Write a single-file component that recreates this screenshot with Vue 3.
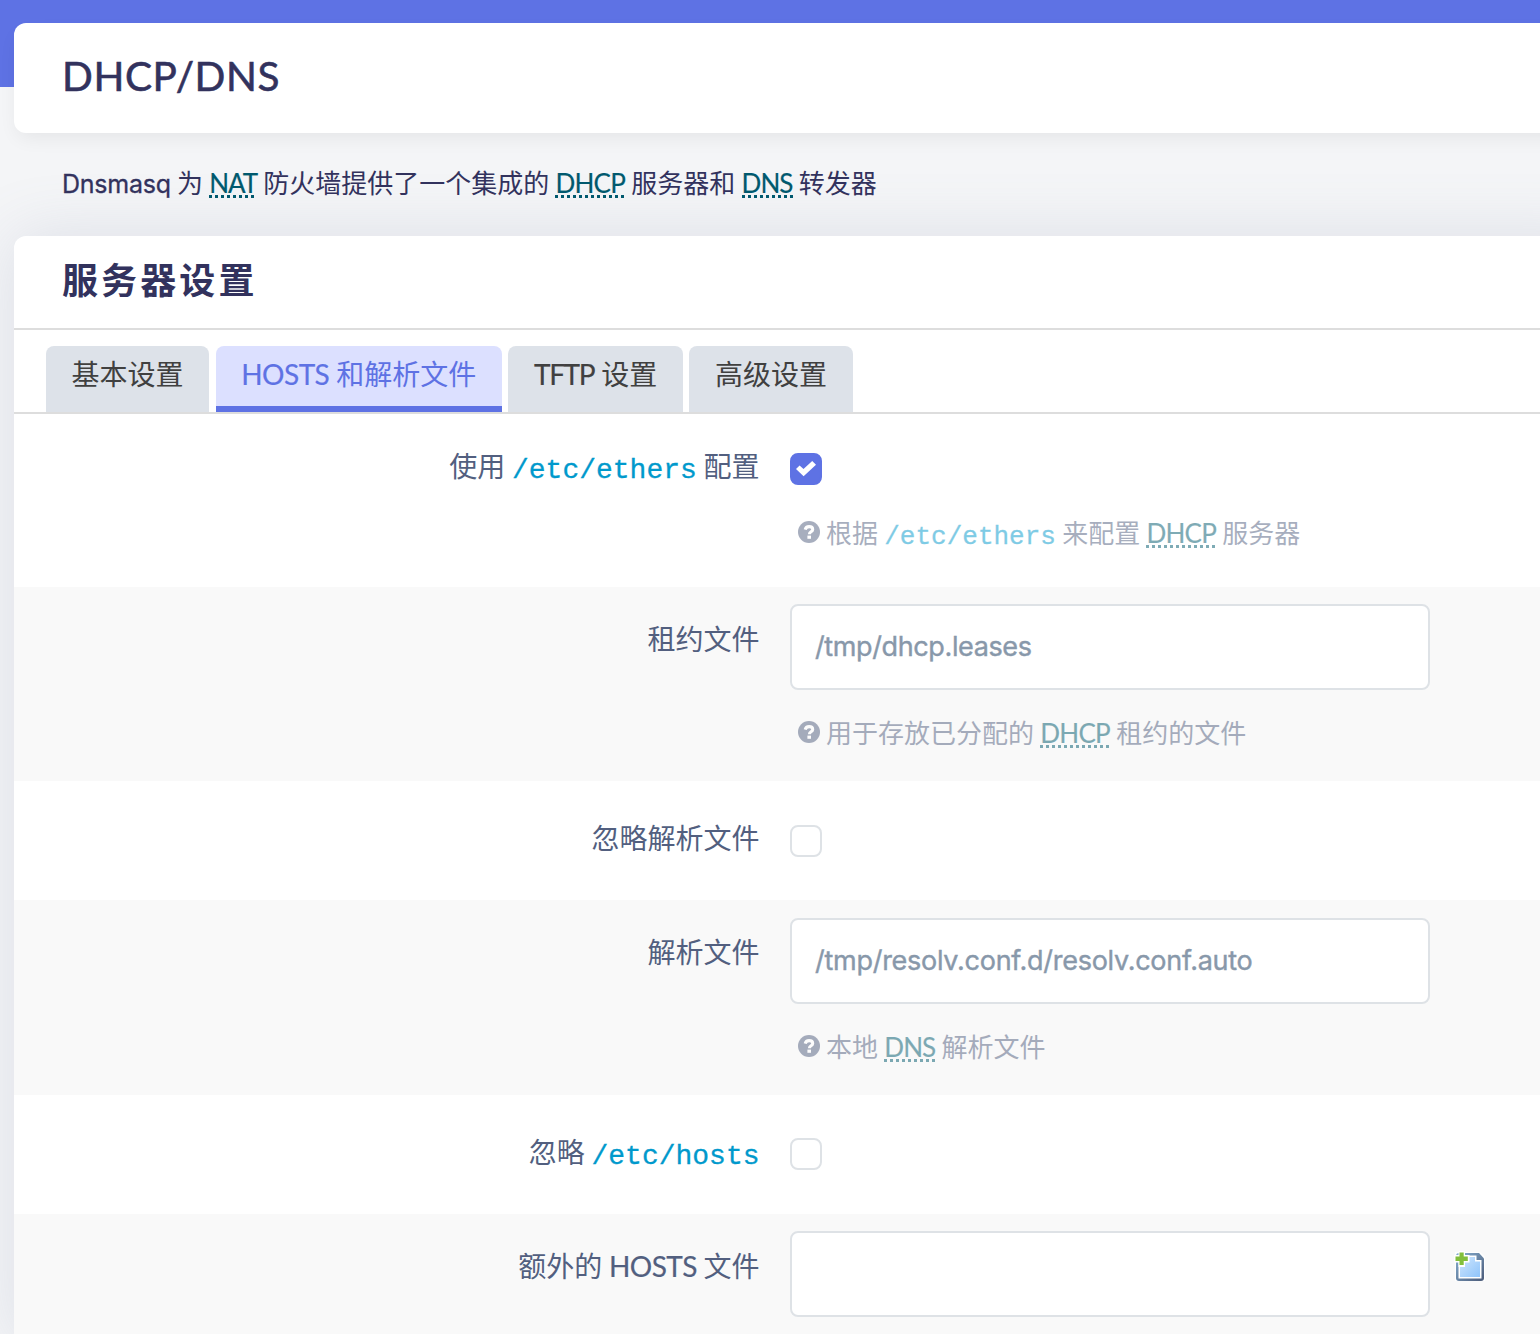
<script setup>
import { h } from 'vue'

const tabs = [
  { han: '基本设置' },
  { latin: 'HOSTS', han: '和解析文件', active: true },
  { latin: 'TFTP', han: '设置' },
  { han: '高级设置' },
]

// Filled help circle shown in front of each hint
const HelpIcon = () =>
  h('svg', { viewBox: '0 0 22 22', width: 22, height: 22 }, [
    h('circle', { cx: 11, cy: 11, r: 11, fill: '#525f7f' }),
    h('path', {
      d: 'M7.2 8.6C7.6 6.6 9 5.6 11.1 5.6c2.1 0 3.6 1.1 3.6 2.9 0 2.4-3.3 2.3-3.3 4.7',
      fill: 'none',
      stroke: '#fff',
      'stroke-width': 3.1,
    }),
    h('rect', { x: 9.4, y: 14.6, width: 3.6, height: 3.2, fill: '#fff' }),
  ])
</script>

<template>
  <div class="page">
    <header class="card title-card"><h2>DHCP/DNS</h2></header>
    <p class="intro"><span class="name">Dnsmasq</span> 为 <abbr class="nat">NAT</abbr> 防火墙提供了一个集成的 <abbr class="dhcp">DHCP</abbr> 服务器和 <abbr class="dns">DNS</abbr> 转发器</p>
    <section class="card settings">
      <h3>服务器设置</h3>
      <nav class="tabs">
        <a v-for="t in tabs" :key="t.han" class="tab" :class="{ active: t.active }"><template v-if="t.latin"><span :class="t.latin.toLowerCase()">{{ t.latin }}</span>&nbsp;</template>{{ t.han }}</a>
      </nav>
      <div class="row r1">
        <label>使用 <code>/etc/ethers</code> 配置</label>
        <div class="field">
          <span class="check on"><svg viewBox="0 0 20 15" width="20" height="15"><path d="M0 7.900 3.600 4.400 7.500 8.100 16.200 0 20 3.700 7.600 15.300Z" fill="#fff" /></svg></span>
          <p class="hint"><HelpIcon class="q" />根据 <code>/etc/ethers</code> 来配置 <abbr class="dhcp">DHCP</abbr> 服务器</p>
        </div>
      </div>
      <div class="row r2 alt">
        <label>租约文件</label>
        <div class="field">
          <div class="input"><span class="lease">/tmp/dhcp.leases</span></div>
          <p class="hint"><HelpIcon class="q" />用于存放已分配的 <abbr class="dhcp">DHCP</abbr> 租约的文件</p>
        </div>
      </div>
      <div class="row r3">
        <label>忽略解析文件</label>
        <div class="field"><span class="check"></span></div>
      </div>
      <div class="row r4 alt">
        <label>解析文件</label>
        <div class="field">
          <div class="input"><span class="resolv">/tmp/resolv.conf.d/resolv.conf.auto</span></div>
          <p class="hint"><HelpIcon class="q" />本地 <abbr class="dns">DNS</abbr> 解析文件</p>
        </div>
      </div>
      <div class="row r5">
        <label>忽略 <code>/etc/hosts</code></label>
        <div class="field"><span class="check"></span></div>
      </div>
      <div class="row r6 alt">
        <label>额外的 <span class="hosts">HOSTS</span> 文件</label>
        <div class="field">
          <div class="input"></div>
          <svg class="add" viewBox="0 0 32 32" width="32" height="32">
            <defs>
              <linearGradient id="edge" x1="0" y1="0" x2="1" y2="1">
                <stop offset="0" stop-color="#86b0d2" />
                <stop offset="1" stop-color="#4b5a78" />
              </linearGradient>
              <linearGradient id="sheet" x1="0" y1="0" x2="1" y2="1">
                <stop offset="0" stop-color="#cfe6fd" />
                <stop offset="1" stop-color="#8fc4fb" />
              </linearGradient>
            </defs>
            <path d="M1 2H26L31 7V31H1Z" fill="#fff" />
            <path d="M5 3H25L30 8.500V28Q30 31 27 31H5Q2 31 2 28V6Q2 3 5 3Z" fill="url(#edge)" />
            <path d="M5 5.500H22.500V10H27.500V28.500H4.500V5.500Z" fill="#fff" />
            <path d="M6 7H21V11.500H26V27H6Z" fill="url(#sheet)" />
            <path d="M4.500 1H11V5H15.500V12.500H11V17H4.500V12.500H0V5H4.500Z" fill="#fff" />
            <path d="M5.500 2.500H9.700V6.500H13.800V11H9.700V15H5.500V11H1.500V6.500H5.500Z" fill="#82bf3c" />
          </svg>
        </div>
      </div>
    </section>
  </div>
</template>

<style>
body { margin: 0; overflow: hidden; }
</style>

<style scoped>
.page { box-sizing: border-box; width: 1540px; height: 1334px; overflow: hidden; padding: 23px 0 0 14px; background: linear-gradient(#5e72e4 87px, #f4f5f7 87px); font-family: Lato, "Noto Sans CJK SC", sans-serif; color: #32325d; }
.card { background: #fff; border-radius: 12px 0 0 12px; margin-right: -60px; }
.title-card { position: relative; height: 110px; box-sizing: border-box; padding: 29px 48px; box-shadow: 0 8px 20px -4px rgba(0, 0, 0, .07); }
.settings { box-shadow: 0 0 64px rgba(120, 135, 165, .19); }
h2 { margin: 0; font-size: 40.5px; line-height: 48px; font-weight: 400; letter-spacing: .6px; -webkit-text-stroke: .6px; }
.intro { position: relative; margin: 0; padding: 31px 48px 0; height: 72px; font-size: 26px; line-height: 38px; }
.intro, .hint { word-spacing: -.4px; }
.name { font-family: Inter, sans-serif; font-size: 25px; letter-spacing: -.25px; -webkit-text-stroke: .3px; }
abbr { color: #00596e; background: repeating-linear-gradient(90deg, currentColor 0 3px, transparent 3px 6px) 0 calc(100% - 1px) / 100% 3px no-repeat; }
.nat { letter-spacing: -1.1px; }
.dhcp { letter-spacing: -.75px; }
.dns { letter-spacing: -.9px; }
.hosts { letter-spacing: -.55px; }
.tftp { letter-spacing: -1.4px; }
h3 { margin: 0; height: 92px; padding-left: 48px; font-size: 36px; line-height: 88px; letter-spacing: 3.1px; border-bottom: 2px solid #ddd; }
.tabs { display: flex; gap: 6.5px; padding: 16px 32px 0; border-bottom: 2px solid #ddd; }
.tab { height: 66px; box-sizing: border-box; padding: 0 25.6px; font-size: 28px; line-height: 56px; background: #dde2e9; color: #404040; border-radius: 8px 8px 0 0; }
.tab.active { background: #dce0ff; color: #5e72e4; border-bottom: 6px solid #5e72e4; }
.hosts, .tftp, abbr { -webkit-text-stroke: .2px; }
.row { display: flex; gap: 30.5px; }
.alt { background: #f9f9f9; }
label { width: 745.5px; text-align: right; font-size: 28px; line-height: 40px; padding-top: 32px; color: #525f7f; word-spacing: -.5px; }
code { position: relative; top: 1px; font-family: "Liberation Mono", "Courier New", monospace; color: #09c; -webkit-text-stroke: .3px; }
.r1 { height: 173px; }
.r2 { height: 194px; }
.r3 { height: 119px; }
.r4 { height: 195px; }
.r5 { height: 119px; }
.r6 { height: 130px; }
.r3 label, .r5 label { padding-top: 37px; }
.check { display: block; box-sizing: border-box; width: 32px; height: 32px; border: 2px solid #dee2e6; border-radius: 8px; margin-top: 44px; background: #fff; }
.r5 .check { margin-top: 43px; }
.check.on { background: #5e72e4; border-color: #5e72e4; margin-top: 39px; padding: 6px 4px; }
.check svg { display: block; overflow: visible; }
.input { box-sizing: border-box; width: 640px; height: 86px; margin-top: 17px; border: 2px solid #dee2e6; border-radius: 8px; background: #fff; padding-left: 23px; font-family: Inter, sans-serif; font-size: 27px; line-height: 81px; color: #8898aa; -webkit-text-stroke: .4px; }
.r4 .input { margin-top: 18px; }
.lease { letter-spacing: -.38px; }
.resolv { letter-spacing: -.27px; }
.hint { margin: 24px 0 0 8px; font-size: 26px; line-height: 38px; color: #525f7f; opacity: .5; }
.r1 .hint { margin-top: 29px; }
.q { margin-right: 6px; }
.r6 .field { display: flex; align-items: flex-start; gap: 24px; }
.add { margin-top: 36px; }
</style>
